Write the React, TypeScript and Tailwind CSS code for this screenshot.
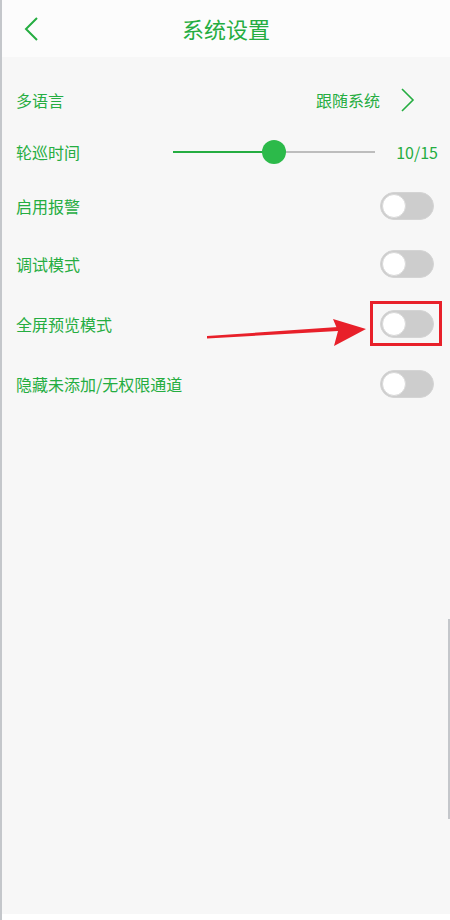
import { useState } from 'react';

const green = 'text-[#25ad41]';

function Toggle({ on = false }: { on?: boolean }) {
  return (
    <div
      className={`w-[54px] h-[28px] rounded-full border border-[#d4d4d4] flex items-center px-[1px] ${
        on ? 'bg-[#25ad41] justify-end' : 'bg-[#cdcdcd]'
      }`}
    >
      <div className="w-[24px] h-[24px] rounded-full bg-white border border-[#d9d9d9]" />
    </div>
  );
}

function Chevron({ dir }: { dir: 'left' | 'right' }) {
  return (
    <svg width="14" height="24" viewBox="0 0 14 24" fill="none">
      <path
        d={dir === 'left' ? 'M13 1L2 12l11 11' : 'M1 1l11 11L1 23'}
        stroke="#25ad41"
        strokeWidth={dir === 'left' ? 2 : 1.6}
      />
    </svg>
  );
}

export default function App() {
  const [value] = useState(10);
  const pct = 50;

  const toggles = [
    { label: '启用报警', h: 'h-[56px]' },
    { label: '调试模式', h: 'h-[60px]' },
    { label: '全屏预览模式', h: 'h-[60px]', marked: true },
    { label: '隐藏未添加/无权限通道', h: 'h-[60px]' },
  ];

  return (
    <div
      className="relative w-[450px] h-[920px] bg-white flex flex-col"
      style={{ fontFamily: '"Noto Sans CJK SC", "Noto Sans", sans-serif' }}
    >
      <div className="h-[57px] bg-[#fcfcfc] flex items-center relative border-l-2 border-[#c4c7cb]">
        <div className="pl-[22px] pt-[1px]">
          <Chevron dir="left" />
        </div>
        <div className={`absolute left-0 right-0 text-center text-[22px] ${green} pointer-events-none`}>
          系统设置
        </div>
      </div>

      <div className="flex-1 bg-[#f7f7f7] border-l-2 border-[#c4c7cb] pt-[17px] relative">
        <div className="h-[52px] flex items-center pl-[14px] pr-[35px]">
          <span className={`text-[16px] ${green}`}>多语言</span>
          <span className={`ml-auto text-[16px] ${green} mr-[21px]`}>跟随系统</span>
          <Chevron dir="right" />
        </div>

        <div className="h-[52px] flex items-center pl-[14px] pr-[12px]">
          <span className={`text-[16px] ${green} w-[157px]`}>轮巡时间</span>
          <div className="relative w-[202px] h-[24px] flex items-center">
            <div className="h-[2px] bg-[#25ad41]" style={{ width: `${pct}%` }} />
            <div className="h-[2px] bg-[#bdbdbd] flex-1" />
            <div
              className="absolute w-[24px] h-[24px] rounded-full bg-[#2cba4a] -translate-x-1/2"
              style={{ left: `${pct}%` }}
            />
          </div>
          <span className={`ml-auto text-[16px] ${green}`}>{value}/15</span>
        </div>

        {toggles.map((t) => (
          <div key={t.label} className={`${t.h} flex items-center pl-[14px] pr-[16px]`}>
            <span className={`text-[16px] ${green}`}>{t.label}</span>
            <div className="ml-auto relative">
              <Toggle />
              {t.marked && (
                <div className="absolute -left-[10px] -top-[9px] w-[72px] h-[45px] border-[3px] border-[#e8202a]" />
              )}
            </div>
          </div>
        ))}

        <svg
          className="absolute left-[200px] top-[259px]"
          width="170"
          height="40"
          viewBox="0 0 170 40"
        >
          <path d="M5 22.5 L136 15 L136 11 L5 20 Z" fill="#e8202a" />
          <path d="M131 3 L164 13 L132 30 L136 15 Z" fill="#e8202a" />
        </svg>

        <div className="absolute right-0 top-[562px] h-[200px] w-[2px] bg-[#c4c7cb]" />
        <div className="absolute left-0 right-0 bottom-0 h-[6px] bg-white" />
      </div>
    </div>
  );
}
